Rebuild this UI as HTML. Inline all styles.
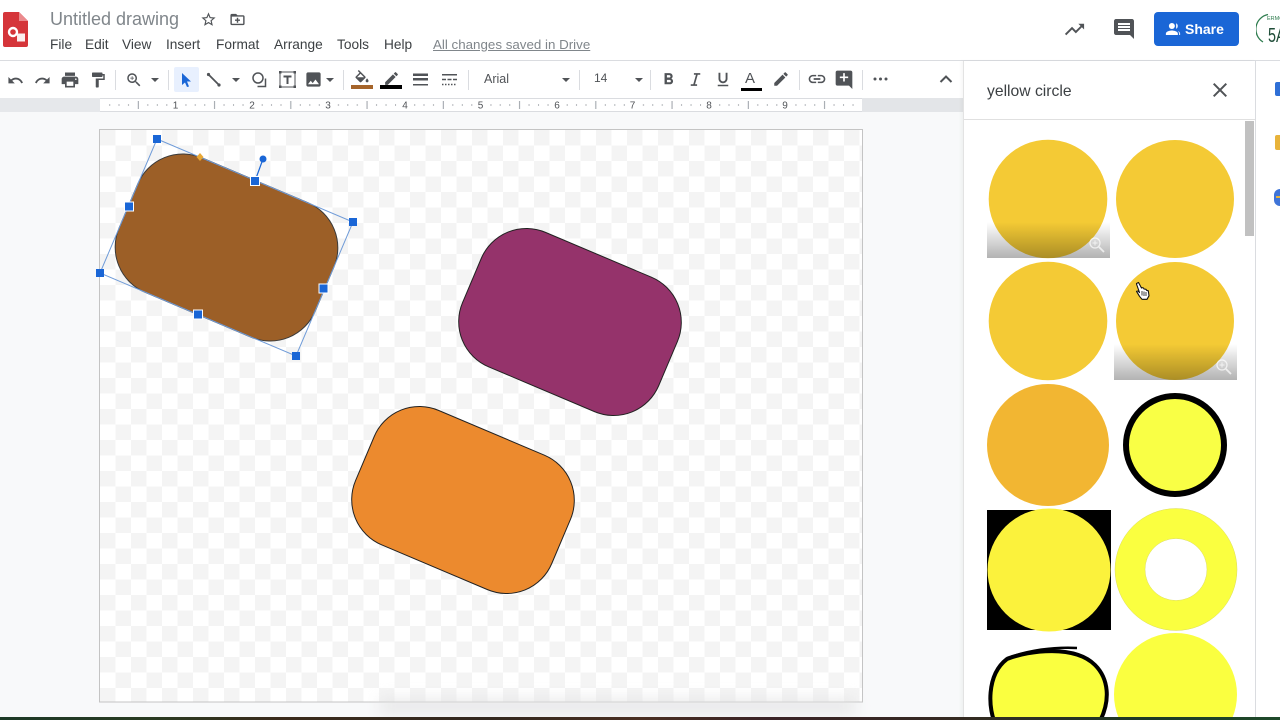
<!DOCTYPE html>
<html><head><meta charset="utf-8"><title>Untitled drawing</title>
<style>
html,body{margin:0;padding:0;width:1280px;height:720px;overflow:hidden;background:#f8f9fa;font-family:"Liberation Sans",Arial,sans-serif}
#w{position:absolute;left:0;top:0;width:1280px;height:720px;overflow:hidden;filter:blur(.35px)}
.a{position:absolute}
.t{position:absolute;white-space:nowrap;line-height:1}
.m{font-size:13.700px;color:#3c4043;top:38px}
.ic{position:absolute;fill:#505357}
.sep{position:absolute;width:1px;top:70px;height:20px;background:#dadce0}
.car{position:absolute;width:0;height:0;border-left:4px solid transparent;border-right:4px solid transparent;border-top:4px solid #505357;top:78px}
</style></head><body><div id="w">
<div class="a" style="left:0;top:0;width:1280px;height:60px;background:#fff"></div>
<div class="a" style="left:0;top:60px;width:1280px;height:1px;background:#dadce0"></div>
<div class="a" style="left:0;top:61px;width:963px;height:37px;background:#fff"></div>

<!-- logo -->
<svg class="a" style="left:0;top:8px" width="32" height="42" viewBox="0 0 32 42"><path d="M5 4H19L28 13V37a2 2 0 0 1-2 2H5a2 2 0 0 1-2-2V6a2 2 0 0 1 2-2z" fill="#d5353a"/><path d="M19 4L28 13H19z" fill="#eb8a8d"/><circle cx="13" cy="24" r="4" fill="none" stroke="#fff" stroke-width="2.400"/><rect x="17" y="25.500" width="8" height="8" fill="#fff" fill-opacity=".92"/></svg>

<div class="t" style="left:50px;top:10px;font-size:18px;color:#80868b">Untitled drawing</div>
<svg class="ic" style="left:200px;top:11px" width="17" height="17" viewBox="0 0 24 24"><path d="M22 9.240l-7.190-.62L12 2 9.190 8.630 2 9.240l5.460 4.730L5.820 21 12 17.270 18.180 21l-1.630-7.030L22 9.240zM12 15.400l-3.760 2.270 1-4.280-3.320-2.880 4.380-.38L12 6.100l1.710 4.040 4.380.38-3.320 2.880 1 4.280L12 15.400z"/></svg>
<svg class="ic" style="left:229px;top:11px" width="17" height="17" viewBox="0 0 24 24"><path d="M20 6h-8l-2-2H4c-1.100 0-2 .9-2 2v12c0 1.100.9 2 2 2h16c1.100 0 2-.9 2-2V8c0-1.100-.9-2-2-2zm0 12H4V8h16v10zM11 9.500h2V12h2.500v2H13v2.500h-2V14H8.500v-2H11z"/></svg>

<div class="t m" style="left:50px">File</div>
<div class="t m" style="left:85px">Edit</div>
<div class="t m" style="left:122px">View</div>
<div class="t m" style="left:166px">Insert</div>
<div class="t m" style="left:216px">Format</div>
<div class="t m" style="left:274px">Arrange</div>
<div class="t m" style="left:337px">Tools</div>
<div class="t m" style="left:384px">Help</div>
<div class="t m" style="left:433px;color:#80868b;font-size:13.350px;text-decoration:underline">All changes saved in Drive</div>

<!-- header right -->
<svg class="ic" style="left:1063px;top:18px" width="23" height="23" viewBox="0 0 24 24"><path d="M16 6l2.290 2.290-4.880 4.880-4-4L2 16.590 3.410 18l6-6 4 4 6.300-6.290L22 12V6z"/></svg>
<svg class="ic" style="left:1112px;top:17px" width="24" height="24" viewBox="0 0 24 24"><path d="M21.990 4c0-1.100-.890-2-1.990-2H4c-1.100 0-2 .9-2 2v12c0 1.100.9 2 2 2h14l4 4-.010-18zM18 14H6v-2h12v2zm0-3H6V9h12v2zm0-3H6V6h12v2z"/></svg>
<div class="a" style="left:1154px;top:12px;width:85px;height:34px;background:#1a66d6;border-radius:4px"></div>
<svg class="a" style="left:1164px;top:20px;fill:#fff" width="18" height="18" viewBox="0 0 24 24"><circle cx="10.500" cy="8" r="4"/><path d="M10.500 14c-2.670 0-8 1.340-8 4v2h16v-2c0-2.660-5.330-4-8-4z"/><path d="M16 4.300a4 4 0 0 1 0 7.400zM18 14.300c2 .7 3.500 1.900 3.500 3.700v2H20v-2c0-1.500-.8-2.800-2-3.700z" fill-opacity=".85"/></svg>
<div class="t" style="left:1185px;top:22px;font-size:14px;font-weight:bold;color:#fff">Share</div>
<svg class="a" style="left:1256px;top:12px" width="24" height="36"><path d="M12 2.500A15 15 0 0 0 7 30" fill="none" stroke="#2f7d4f" stroke-width="1.300"/><text x="11" y="8" font-family="Liberation Sans" font-size="5.500" fill="#2f7d4f">ERMO</text><text transform="translate(12 30) scale(.72 1)" font-family="Liberation Sans" font-size="20" fill="#1f4d38">5A</text></svg>

<!-- toolbar icons -->
<svg class="ic" style="left:7px;top:72px" width="17" height="17" viewBox="0 0 24 24"><path d="M12.500 8c-2.650 0-5.050.99-6.900 2.600L2 7v9h9l-3.620-3.620c1.390-1.160 3.160-1.880 5.120-1.880 3.540 0 6.550 2.310 7.600 5.500l2.370-.78C21.080 11.030 17.150 8 12.500 8z"/></svg>
<svg class="ic" style="left:34px;top:72px" width="17" height="17" viewBox="0 0 24 24"><path d="M18.400 10.600C16.550 8.990 14.150 8 11.500 8c-4.650 0-8.580 3.030-9.960 7.220L3.900 16c1.050-3.190 4.050-5.500 7.600-5.500 1.950 0 3.730.72 5.120 1.880L13 16h9V7l-3.600 3.600z"/></svg>
<svg class="ic" style="left:60px;top:70px" width="20" height="20" viewBox="0 0 24 24"><path d="M19 8H5c-1.660 0-3 1.340-3 3v6h4v4h12v-4h4v-6c0-1.660-1.340-3-3-3zm-3 11H8v-5h8v5zm3-7c-.55 0-1-.45-1-1s.45-1 1-1 1 .45 1 1-.45 1-1 1zm-1-9H6v4h12V3z"/></svg>
<svg class="ic" style="left:89px;top:71px" width="18" height="18" viewBox="0 0 24 24"><path d="M18 4V3c0-.55-.45-1-1-1H5c-.55 0-1 .45-1 1v4c0 .55.45 1 1 1h12c.55 0 1-.45 1-1V6h1v4H9v11c0 .55.45 1 1 1h2c.55 0 1-.45 1-1v-9h8V4h-3z"/></svg>
<div class="sep" style="left:115px"></div>
<svg class="ic" style="left:125px;top:71px" width="18" height="18" viewBox="0 0 24 24"><path d="M15.500 14h-.79l-.28-.27C15.410 12.590 16 11.110 16 9.500 16 5.910 13.090 3 9.500 3S3 5.910 3 9.500 5.910 16 9.500 16c1.610 0 3.090-.59 4.230-1.570l.27.28v.79l5 4.990L20.490 19l-4.990-5zm-6 0C7.010 14 5 11.990 5 9.500S7.010 5 9.500 5 14 7.010 14 9.500 11.990 14 9.500 14zM10 7H9v2H7v1h2v2h1v-2h2V9h-2z"/></svg>
<div class="car" style="left:151px"></div>
<div class="sep" style="left:168px"></div>
<div class="a" style="left:174px;top:67px;width:25px;height:25px;background:#e8f0fe;border-radius:2px"></div>
<svg class="a" style="left:180px;top:72px" width="13" height="16" viewBox="0 0 13 16"><path d="M2 1L11 9.500H7L9 14.500 7 15 5 10.500 2 13z" fill="#1a66d6"/></svg>
<svg class="a" style="left:206px;top:72px" width="16" height="16" viewBox="0 0 16 16"><path d="M2.500 2.500L13 13" stroke="#505357" stroke-width="1.800"/><circle cx="2.500" cy="2.500" r="1.600" fill="#505357"/><circle cx="13" cy="13" r="1.600" fill="#505357"/></svg>
<div class="car" style="left:232px"></div>
<svg class="a" style="left:251px;top:71px" width="17" height="17" viewBox="0 0 17 17"><circle cx="7" cy="7" r="5" fill="none" stroke="#505357" stroke-width="1.500"/><path d="M14.500 7.500V15.500H6.500" fill="none" stroke="#505357" stroke-width="1.500"/></svg>
<svg class="a" style="left:278px;top:70px" width="19" height="19" viewBox="0 0 19 19"><rect x="2" y="2" width="15" height="15" fill="none" stroke="#505357" stroke-width="1"/><rect x="1" y="1" width="2.500" height="2.500" fill="#505357"/><rect x="15.500" y="1" width="2.500" height="2.500" fill="#505357"/><rect x="1" y="15.500" width="2.500" height="2.500" fill="#505357"/><rect x="15.500" y="15.500" width="2.500" height="2.500" fill="#505357"/><path d="M5.500 5.500H13.500V7.500H10.500V14H8.500V7.500H5.500z" fill="#505357"/></svg>
<svg class="ic" style="left:304px;top:70px" width="19" height="19" viewBox="0 0 24 24"><path d="M21 19V5c0-1.100-.9-2-2-2H5c-1.100 0-2 .9-2 2v14c0 1.100.9 2 2 2h14c1.100 0 2-.9 2-2zM8.500 13.500l2.500 3.010L14.500 12l4.500 6H5l3.500-4.500z"/></svg>
<div class="car" style="left:326px"></div>
<div class="sep" style="left:343px"></div>
<svg class="ic" style="left:353px;top:70px" width="18" height="16" viewBox="0 0 24 22"><path d="M16.560 8.940L7.620 0 6.210 1.410l2.380 2.380-5.150 5.150c-.59.59-.59 1.540 0 2.120l5.500 5.500c.29.29.68.44 1.060.44s.77-.15 1.060-.44l5.500-5.500c.59-.58.59-1.530 0-2.120zM5.210 10L10 5.210 14.790 10H5.210zM19 11.500s-2 2.170-2 3.500c0 1.100.9 2 2 2s2-.9 2-2c0-1.330-2-3.500-2-3.500z"/></svg>
<div class="a" style="left:351px;top:85px;width:22px;height:4px;background:#a5642a"></div>
<svg class="ic" style="left:383px;top:70px" width="17" height="17" viewBox="0 0 24 24"><path d="M3 17.250V21h3.750L17.810 9.940l-3.750-3.750L3 17.250zM20.710 7.040c.39-.39.39-1.020 0-1.410l-2.340-2.340c-.39-.39-1.020-.39-1.410 0l-1.830 1.830 3.750 3.750 1.830-1.830z"/></svg>
<div class="a" style="left:380px;top:85px;width:22px;height:4px;background:#000"></div>
<svg class="a" style="left:413px;top:73px" width="15" height="14" viewBox="0 0 15 14"><rect width="15" height="2.500" y="0.500" fill="#505357"/><rect width="15" height="2.500" y="5" fill="#505357"/><rect width="15" height="1.500" y="11" fill="#505357"/></svg>
<svg class="a" style="left:442px;top:74px" width="15" height="12" viewBox="0 0 15 12"><rect width="15" height="1.500" y="0" fill="#505357"/><path d="M0 5.500H15" stroke="#505357" stroke-width="1.500" stroke-dasharray="4 1.500"/><path d="M0 10.500H15" stroke="#505357" stroke-width="1.500" stroke-dasharray="1.500 1.500"/></svg>
<div class="sep" style="left:468px"></div>
<div class="t" style="left:484px;top:73px;font-size:12.500px;color:#505357">Arial</div>
<div class="car" style="left:562px"></div>
<div class="sep" style="left:579px"></div>
<div class="t" style="left:594px;top:72px;font-size:12px;color:#505357">14</div>
<div class="car" style="left:635px"></div>
<div class="sep" style="left:650px"></div>
<svg class="ic" style="left:659px;top:70px" width="19" height="19" viewBox="0 0 24 24"><path d="M15.600 10.790c.97-.67 1.650-1.770 1.650-2.790 0-2.260-1.750-4-4-4H7v14h7.040c2.090 0 3.710-1.700 3.710-3.790 0-1.520-.86-2.820-2.150-3.420zM10 6.500h3c.83 0 1.500.67 1.500 1.500s-.67 1.500-1.500 1.500h-3v-3zm3.500 9H10v-3h3.500c.83 0 1.500.67 1.500 1.500s-.67 1.500-1.500 1.500z"/></svg>
<svg class="ic" style="left:686px;top:70px" width="19" height="19" viewBox="0 0 24 24"><path d="M10 4v2h2.600l-3.400 12H6v2h8v-2h-2.600l3.400-12H18V4z"/></svg>
<svg class="ic" style="left:714px;top:70px" width="18" height="19" viewBox="0 0 24 24"><path d="M12 17c3.310 0 6-2.690 6-6V3h-2.500v8c0 1.930-1.570 3.500-3.500 3.500S8.500 12.930 8.500 11V3H6v8c0 3.310 2.690 6 6 6zm-7 2v2h14v-2H5z"/></svg>
<div class="t" style="left:745px;top:71px;font-size:15px;color:#505357">A</div>
<div class="a" style="left:741px;top:88px;width:21px;height:3px;background:#000"></div>
<svg class="ic" style="left:772px;top:70px" width="18" height="18" viewBox="0 0 24 24"><path d="M3 17.250V21h3.750L17.810 9.940l-3.750-3.750L3 17.250zM20.710 7.040c.39-.39.39-1.020 0-1.410l-2.340-2.340c-.39-.39-1.020-.39-1.410 0l-1.830 1.830 3.750 3.750 1.830-1.830z"/></svg>
<div class="sep" style="left:799px"></div>
<svg class="ic" style="left:807px;top:69px" width="20" height="20" viewBox="0 0 24 24"><path d="M3.900 12c0-1.710 1.390-3.100 3.100-3.100h4V7H7c-2.760 0-5 2.240-5 5s2.240 5 5 5h4v-1.900H7c-1.710 0-3.100-1.390-3.100-3.100zM8 13h8v-2H8v2zm9-6h-4v1.900h4c1.710 0 3.100 1.390 3.100 3.100s-1.390 3.100-3.100 3.100h-4V17h4c2.760 0 5-2.240 5-5s-2.240-5-5-5z"/></svg>
<svg class="ic" style="left:834px;top:69px" width="20" height="20" viewBox="0 0 24 24"><path d="M22 4c0-1.100-.9-2-2-2H4c-1.100 0-2 .9-2 2v14c0 1.100.9 2 2 2h14l4 4V4zm-5 7h-4v4h-2v-4H7V9h4V5h2v4h4v2z"/></svg>
<div class="sep" style="left:862px"></div>
<svg class="a" style="left:873px;top:76px" width="15" height="6"><circle cx="2" cy="3" r="1.500" fill="#505357"/><circle cx="7.500" cy="3" r="1.500" fill="#505357"/><circle cx="13" cy="3" r="1.500" fill="#505357"/></svg>
<svg class="a" style="left:939px;top:74px" width="14" height="10"><path d="M1.500 8L7 2.500 12.500 8" fill="none" stroke="#505357" stroke-width="2"/></svg>

<!-- ruler -->
<div class="a" style="left:0;top:98px;width:963px;height:14px;background:#fff;border-top:1px solid #dadce0;border-bottom:1px solid #dadce0;box-sizing:border-box"></div>
<div class="a" style="left:0;top:98px;width:100px;height:14px;background:#e6e8eb"></div>
<div class="a" style="left:862px;top:98px;width:101px;height:14px;background:#e3e5e8"></div>
<svg class="a" style="left:100px;top:99px" width="762" height="12">
<defs><pattern id="tk" width="76.250" height="12" patternUnits="userSpaceOnUse">
<rect x="9.200" y="5" width="1" height="2" fill="#b4b7bb"/><rect x="18.500" y="5" width="1" height="2" fill="#b4b7bb"/><rect x="28" y="5" width="1" height="2" fill="#b4b7bb"/><rect x="37.800" y="2" width="1" height="8" fill="#9aa0a6"/><rect x="47.300" y="5" width="1" height="2" fill="#b4b7bb"/><rect x="56.800" y="5" width="1" height="2" fill="#b4b7bb"/><rect x="66.300" y="5" width="1" height="2" fill="#b4b7bb"/>
</pattern></defs>
<rect width="762" height="12" fill="url(#tk)"/>
<g font-family="Liberation Sans" font-size="10" fill="#505357" text-anchor="middle">
<rect x="70" width="11" height="12" fill="#fff"/><text x="75.500" y="9.500">1</text>
<rect x="146" width="11" height="12" fill="#fff"/><text x="152" y="9.500">2</text>
<rect x="222" width="11" height="12" fill="#fff"/><text x="228" y="9.500">3</text>
<rect x="299" width="11" height="12" fill="#fff"/><text x="305" y="9.500">4</text>
<rect x="375" width="11" height="12" fill="#fff"/><text x="380.500" y="9.500">5</text>
<rect x="451" width="11" height="12" fill="#fff"/><text x="457" y="9.500">6</text>
<rect x="527" width="11" height="12" fill="#fff"/><text x="532.500" y="9.500">7</text>
<rect x="603" width="11" height="12" fill="#fff"/><text x="609" y="9.500">8</text>
<rect x="679" width="11" height="12" fill="#fff"/><text x="685" y="9.500">9</text>
</g></svg>

<!-- canvas -->
<svg class="a" style="left:0;top:0" width="963" height="720">
<defs>
<pattern id="ck" x="100" y="130" width="31" height="31" patternUnits="userSpaceOnUse"><rect width="31" height="31" fill="#fff"/><rect width="15.500" height="15.500" fill="#f4f4f4"/><rect x="15.500" y="15.500" width="15.500" height="15.500" fill="#f4f4f4"/></pattern>
</defs>
<rect x="99.500" y="129.500" width="763" height="572.500" fill="url(#ck)" stroke="#c4c4c4"/>
<rect x="-106.500" y="-73" width="213" height="146" rx="49" ry="49" transform="translate(226.500 247.500) rotate(22.950)" fill="#9c5f27" stroke="#3a3a3a" stroke-width="1"/>
<rect x="-106.500" y="-73" width="213" height="146" rx="49" ry="49" transform="translate(570 322) rotate(22.950)" fill="#95336b" stroke="#222" stroke-width="1"/>
<rect x="-106.500" y="-73" width="213" height="146" rx="49" ry="49" transform="translate(463 500) rotate(22.950)" fill="#ec8a2e" stroke="#222" stroke-width="1"/>
<!-- selection -->
<path d="M157 139L353 222L296 356L100 273Z" fill="none" stroke="#6f9bd8" stroke-width="1"/>
<path d="M255 181L263 159" stroke="#1a66d6" stroke-width="1.200"/>
<circle cx="263" cy="159" r="3.500" fill="#1a66d6"/>
<g fill="#1a66d6">
<rect x="153" y="135" width="8" height="8"/><rect x="349" y="218" width="8" height="8"/><rect x="292" y="352" width="8" height="8"/><rect x="96" y="269" width="8" height="8"/>
</g>
<g fill="#1a66d6" stroke="#fff" stroke-width="1">
<rect x="250.500" y="176.500" width="9" height="9"/><rect x="124.500" y="202" width="9" height="9"/><rect x="319" y="284" width="9" height="9"/><rect x="193.500" y="310" width="9" height="9"/>
</g>
<path d="M200 153L203.500 157 200 161 196.500 157Z" fill="#e8a735"/>
</svg>
<div class="a" style="left:380px;top:698px;width:475px;height:16px;background:#e2e2e3;filter:blur(7px);opacity:.7"></div>

<!-- side panel -->
<div class="a" style="left:963px;top:61px;width:291px;height:659px;background:#fff;border-left:1px solid #e3e3e3;border-right:1px solid #dadce0;box-shadow:-2px 0 3px rgba(0,0,0,.04)"></div>
<div class="a" style="left:1256px;top:61px;width:24px;height:659px;background:#fff"></div>
<div class="t" style="left:987px;top:84px;font-size:15.700px;color:#3c4043">yellow circle</div>
<svg class="ic" style="left:1208px;top:78px;fill:#505357" width="24" height="24" viewBox="0 0 24 24"><path d="M19 6.410L17.590 5 12 10.590 6.410 5 5 6.410 10.590 12 5 17.590 6.410 19 12 13.410 17.590 19 19 17.590 13.410 12z"/></svg>
<div class="a" style="left:964px;top:119px;width:291px;height:1px;background:#e0e0e0"></div>
<div class="a" style="left:1245px;top:121px;width:9px;height:115px;background:#c1c1c1"></div>
<div class="a" style="left:1275px;top:82px;width:5px;height:14px;background:#2f6fd6;border-radius:2px 0 0 2px"></div>
<div class="a" style="left:1275px;top:135px;width:5px;height:15px;background:#e8b33a;border-radius:2px 0 0 2px"></div>
<div class="a" style="left:1274px;top:189px;width:6px;height:17px;background:#3f74d8;border-radius:9px 0 0 9px"></div>
<div class="a" style="left:1276px;top:196px;width:4px;height:2px;background:#e8b33a"></div>

<svg class="a" style="left:964px;top:120px" width="281" height="600" viewBox="964 120 281 600">
<defs><linearGradient id="gr" x1="0" y1="0" x2="0" y2="1"><stop offset="0" stop-color="#000" stop-opacity="0"/><stop offset="1" stop-color="#000" stop-opacity=".3"/></linearGradient></defs>
<circle cx="1048" cy="199" r="59.300" fill="#f4ca35"/>
<rect x="987" y="222" width="123" height="36" fill="url(#gr)"/>
<g fill="none" stroke="#fff" stroke-opacity=".7"><circle cx="1095" cy="243" r="5" stroke-width="1.300"/><path d="M1099 247L1104 252" stroke-width="1.800"/><path d="M1095 240.500v5M1092.500 243h5"/></g>
<circle cx="1175" cy="199" r="59" fill="#f4ca35"/>
<circle cx="1048" cy="321" r="59.300" fill="#f4ca35"/>
<circle cx="1175" cy="321" r="59" fill="#f4ca35"/>
<rect x="1114" y="344" width="123" height="36" fill="url(#gr)"/>
<g fill="none" stroke="#fff" stroke-opacity=".7"><circle cx="1222" cy="365" r="5" stroke-width="1.300"/><path d="M1226 369L1231 374" stroke-width="1.800"/><path d="M1222 362.500v5M1219.500 365h5"/></g>
<circle cx="1048" cy="445" r="61" fill="#f2b632"/>
<circle cx="1175" cy="445" r="49" fill="#f9ff45" stroke="#000" stroke-width="6"/>
<rect x="987" y="510" width="124" height="120" fill="#000"/>
<circle cx="1049" cy="570" r="61.500" fill="#fbf23c"/>
<circle cx="1176" cy="569.500" r="46" fill="none" stroke="#faff40" stroke-width="30"/>
<circle cx="1176" cy="569.500" r="61" fill="none" stroke="#dcdc60" stroke-width=".5"/>
<circle cx="1176" cy="569.500" r="31" fill="none" stroke="#dcdc60" stroke-width=".5"/>
<circle cx="1175.500" cy="694.500" r="61.500" fill="#faff40"/>
<path d="M1007 659C1030 650 1075 645 1095 665C1108 678 1112 700 1098 725L996 725C988 710 986 675 1007 659Z" fill="#faff40" stroke="#000" stroke-width="4"/>
<path d="M1007 658C1030 650 1055 647 1077 648" fill="none" stroke="#000" stroke-width="2.500"/>
<!-- hand cursor -->
<path d="M1136.500 283.500l2-1 3 5.500v-.5l2 .5.5 1 2 .3.5 1 1.800.5.7 5-2 3.500h-5l-2.500-3-3-5 1.500-.3 1.500 1.500-3-8.500z" fill="#fff" stroke="#111" stroke-width="1.100" stroke-linejoin="round"/>
<path d="M1142 291v4.500M1144 291.500v4.500M1146 292v4" stroke="#111" stroke-width=".8"/>
</svg>

<!-- bottom strip -->
<div class="a" style="left:0;top:717px;width:1280px;height:3px;background:linear-gradient(90deg,#1c3a26 0,#2a3b22 12%,#3a2a1c 22%,#33291f 38%,#4a2f22 50%,#3a2326 60%,#352a22 75%,#1c3a26 90%,#1f4a2a 100%)"></div>
</div></body></html>
